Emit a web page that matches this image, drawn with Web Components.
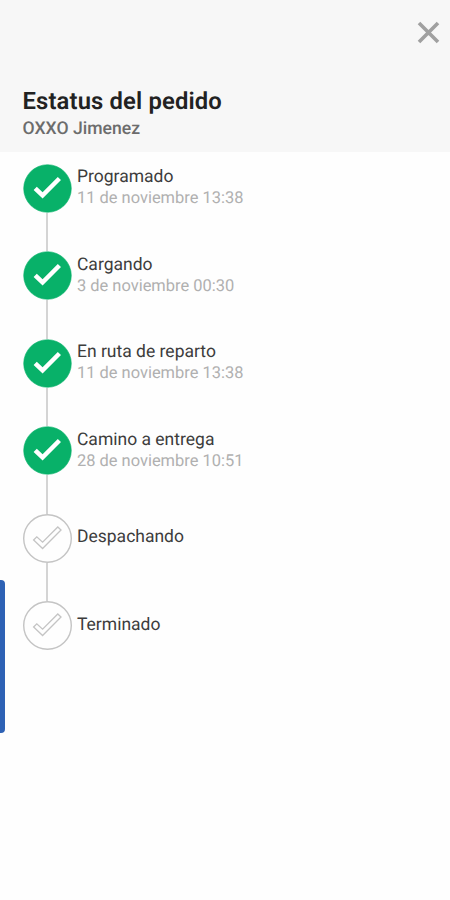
<!DOCTYPE html>
<html lang="es">
<head>
<meta charset="utf-8">
<title>Estatus del pedido</title>
<style>
html, body { margin: 0; height: 100%; background: #fefefe; overflow: hidden; }
body { font-family: Roboto, "Liberation Sans", sans-serif; text-rendering: geometricPrecision; }
</style>
</head>
<body>
<order-status>
  <order-header slot="header"><span slot="title">Estatus del pedido</span><span slot="store">OXXO Jimenez</span></order-header>
  <status-step done>Programado<span slot="date">11 de noviembre 13:38</span></status-step>
  <status-step done>Cargando<span slot="date">3 de noviembre 00:30</span></status-step>
  <status-step done>En ruta de reparto<span slot="date">11 de noviembre 13:38</span></status-step>
  <status-step done>Camino a entrega<span slot="date">28 de noviembre 10:51</span></status-step>
  <status-step>Despachando</status-step>
  <status-step last>Terminado</status-step>
</order-status>
<script>
class Base extends HTMLElement {
  constructor() {
    super();
    this.attachShadow({ mode: 'open' }).innerHTML = this.constructor.markup;
  }
}

class OrderStatus extends Base {
  static markup = `
    <style>
      :host { display: flex; flex-direction: column; position: relative; height: 900px; overflow: hidden; }
      .steps { display: flex; flex-direction: column; padding: 11.5px 22.7px 0; }
      .handle { position: absolute; left: -6px; top: 580px; width: 10.5px; height: 153px; border-radius: 0 4px 4px 0; background: #2e62b5; }
    </style>
    <slot name="header"></slot>
    <div class="steps"><slot></slot></div>
    <div class="handle"></div>`;
}
customElements.define('order-status', OrderStatus);

class OrderHeader extends Base {
  static markup = `
    <style>
      :host { display: flex; flex-direction: column; box-sizing: border-box; height: 152px; padding: 21px 10.5px 0 22.5px; background: #f7f7f7; }
      svg { display: block; align-self: flex-end; width: 23px; height: 23px; }
      h1 { margin: 42px 0 0; font-size: 23.8px; line-height: 30px; font-weight: 600; letter-spacing: .15px; color: #222; }
      p { margin: 1px 0 0; font-size: 17.6px; line-height: 24px; font-weight: 500; color: #6c6c6c; }
    </style>
    <svg viewBox="0 0 23 23" role="img" aria-label="Cerrar"><path d="M2 2 21 21M21 2 2 21" stroke="#a0a0a0" stroke-width="3.6" fill="none"/></svg>
    <h1><slot name="title"></slot></h1>
    <p><slot name="store"></slot></p>`;
}
customElements.define('order-header', OrderHeader);

class StatusStep extends Base {
  static markup = `
    <style>
      :host { display: flex; height: 87.5px; gap: 5.3px; }
      .rail { display: flex; flex-direction: column; align-items: center; width: 49px; }
      svg { display: block; flex: none; width: 49px; height: 49px; }
      circle { fill: #fefefe; stroke: #c4c4c4; stroke-width: 1.4; }
      path { fill: none; stroke: #c4c4c4; stroke-width: 1.3; }
      :host([done]) circle { fill: #08b169; stroke: #08b169; stroke-width: .6; }
      :host([done]) path { fill: #fff; stroke: none; }
      .line { flex: 1; width: 2px; margin-right: 1px; background: #d4d4d4; }
      :host([last]) .line { display: none; }
      .text { display: flex; flex-direction: column; padding-top: 12.5px; white-space: nowrap; }
      :host([done]) .text { padding-top: 2.5px; }
      .name { font-size: 17.5px; line-height: 22px; color: #3c3c3c; }
      .date { font-size: 16.45px; line-height: 22px; padding-top: .4px; color: #b0b0b0; }
    </style>
    <div class="rail">
      <svg viewBox="0 0 49 49" aria-hidden="true"><circle cx="24.5" cy="24.5" r="23.8"/><path d="M10.6 26 13.8 22.8 19.6 28.2 34.8 13 38 16 19.6 34.5Z"/></svg>
      <div class="line"></div>
    </div>
    <div class="text"><div class="name"><slot></slot></div><div class="date"><slot name="date"></slot></div></div>`;
}
customElements.define('status-step', StatusStep);
</script>
</body>
</html>
